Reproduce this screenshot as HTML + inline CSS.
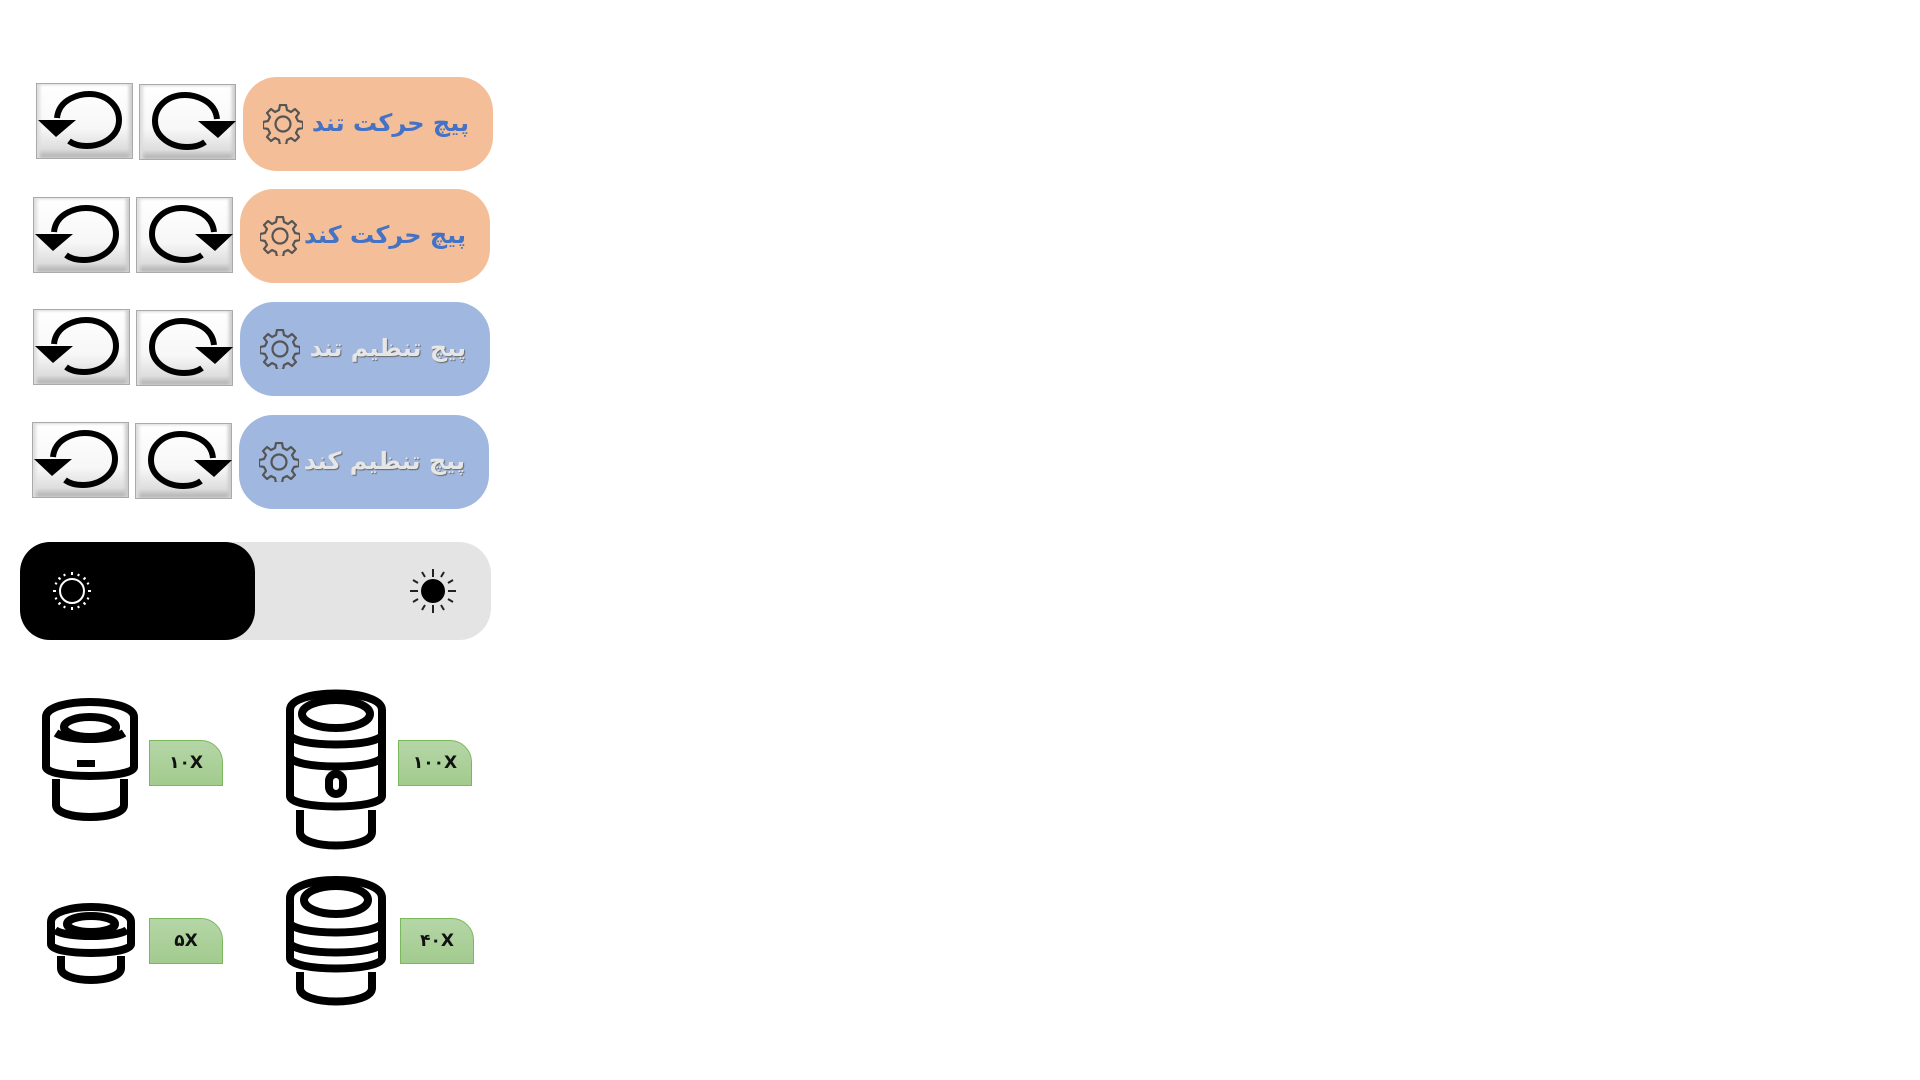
<!DOCTYPE html>
<html><head><meta charset="utf-8"><style>
body{margin:0;width:1920px;height:1080px;background:#fff;position:relative;overflow:hidden;font-family:"DejaVu Sans","Liberation Sans",sans-serif}
.a{position:absolute}
.btn{position:absolute;width:97px;height:76px;box-sizing:border-box;border:1px solid #aaa;background:linear-gradient(180deg,#fff 0%,#f7f7f7 60%,#ddd 88%,#aaa 100%);box-shadow:inset 3px 0 3px #ddd,inset -3px 0 3px #ccc}
.pill{position:absolute;width:250px;height:94px;border-radius:34px}
.pill span{position:absolute;right:24px;top:26px;font-weight:bold;font-size:24px;direction:rtl;white-space:nowrap;line-height:40px}
.or{background:#f4bf98;color:#4472c4}
.bl{background:#a0b8e0;color:#e6e6e6;text-shadow:1px 1px 1px #666}
.pill svg{position:absolute;left:20px;top:27px}
.lab{position:absolute;width:74px;height:46px;background:linear-gradient(180deg,#b5d6a7,#a2cb8e);border:1px solid #7ab85c;box-sizing:border-box;border-top-right-radius:22px;display:flex;align-items:center;justify-content:center;font-size:17px;font-weight:bold;color:#111}
</style></head><body>
<svg width="0" height="0" style="position:absolute"><defs>
<g id="ccw"><path d="M20 34 C22 14 44 10 52 10 C70 10 82 22 82 36 C82 52 66 62 50 62 C42 62 36 60 32 57" fill="none" stroke="#000" stroke-width="6"/><path d="M1 36 L39 36 L19 53 Z" fill="#000"/></g>
<g id="cw"><path d="M77 34 C75 14 53 10 45 10 C27 10 15 22 15 36 C15 52 31 62 47 62 C55 62 61 60 65 57" fill="none" stroke="#000" stroke-width="6"/><path d="M58 36 L96 36 L78 53 Z" fill="#000"/></g>
<g id="gear"><path d="M17 1h6l1 5 4 2 4-3 4 4-3 4 2 4 5 1v6l-5 1-2 4 3 4-4 4-4-3-4 2-1 5h-6l-1-5-4-2-4 3-4-4 3-4-2-4-5-1v-6l5-1 2-4-3-4 4-4 4 3 4-2z" fill="none" stroke="#555" stroke-width="2.2" stroke-linejoin="round"/><circle cx="20" cy="20" r="7.5" fill="none" stroke="#555" stroke-width="2.2"/></g>
</defs></svg>

<div class="btn" style="left:36px;top:83px"><svg width="97" height="76"><use href="#ccw"/></svg></div>
<div class="btn" style="left:139px;top:84px"><svg width="97" height="76"><use href="#cw"/></svg></div>
<div class="btn" style="left:33px;top:197px"><svg width="97" height="76"><use href="#ccw"/></svg></div>
<div class="btn" style="left:136px;top:197px"><svg width="97" height="76"><use href="#cw"/></svg></div>
<div class="btn" style="left:33px;top:309px"><svg width="97" height="76"><use href="#ccw"/></svg></div>
<div class="btn" style="left:136px;top:310px"><svg width="97" height="76"><use href="#cw"/></svg></div>
<div class="btn" style="left:32px;top:422px"><svg width="97" height="76"><use href="#ccw"/></svg></div>
<div class="btn" style="left:135px;top:423px"><svg width="97" height="76"><use href="#cw"/></svg></div>

<div class="pill or" style="left:243px;top:77px"><svg width="40" height="40"><use href="#gear"/></svg><span>پیچ حرکت تند</span></div>
<div class="pill or" style="left:240px;top:189px"><svg width="40" height="40"><use href="#gear"/></svg><span>پیچ حرکت کند</span></div>
<div class="pill bl" style="left:240px;top:302px"><svg width="40" height="40"><use href="#gear"/></svg><span>پیچ تنظیم تند</span></div>
<div class="pill bl" style="left:239px;top:415px"><svg width="40" height="40"><use href="#gear"/></svg><span>پیچ تنظیم کند</span></div>

<div class="a" style="left:20px;top:542px;width:471px;height:98px;background:#e4e4e4;border-radius:32px"></div>
<div class="a" style="left:20px;top:542px;width:235px;height:98px;background:#000;border-radius:30px"></div>
<svg class="a" style="left:52px;top:571px" width="40" height="40"><circle cx="20" cy="20" r="12" fill="none" stroke="#fff" stroke-width="2"/><g stroke="#fff" stroke-width="2"><path d="M20 1v3M20 36v3M1 20h3M36 20h3M6.5 6.5l2 2M31.5 31.5l2 2M6.5 33.5l2-2M31.5 8.5l2-2M12 3l1 2M27 3l-1 2M12 37l1-2M27 37l-1-2M3 12l2 1M37 12l-2 1M3 28l2-1M37 28l-2-1"/></g></svg>
<svg class="a" style="left:408px;top:566px" width="50" height="50"><circle cx="25" cy="25" r="12" fill="#000"/><g stroke="#222" stroke-width="2"><path d="M25 3v8M25 39v8M2 25h8M40 25h8M14 6l3 5M36 6l-3 5M14 44l3-5M36 44l-3-5M5 14l5 3M45 14l-5 3M5 36l5-3M45 36l-5-3"/></g></svg>

<svg class="a" style="left:40px;top:695px" width="100" height="128" fill="none" stroke="#000" stroke-width="8" stroke-linejoin="round">
<path d="M6 22 C6 2 94 2 94 22 V72 C94 84 6 84 6 72 Z"/><path d="M16 38 C28 46 72 46 84 38"/><ellipse cx="50" cy="32" rx="26" ry="10"/>
<path d="M16 84 V110 C16 126 84 126 84 110 V84"/><rect x="37" y="65" width="18" height="7" fill="#000" stroke="none"/></svg>
<div class="lab" style="left:149px;top:740px">۱۰X</div>

<svg class="a" style="left:284px;top:686px" width="104" height="166" fill="none" stroke="#000" stroke-width="8" stroke-linejoin="round">
<path d="M6 24 C6 2 98 2 98 24 V110 C98 124 6 124 6 110 Z"/><ellipse cx="52" cy="28" rx="34" ry="14"/>
<path d="M6 48 C6 62 98 62 98 48"/><path d="M6 70 C6 84 98 84 98 70"/>
<path d="M16 124 V146 C16 164 88 164 88 146 V124"/><rect x="45" y="88" width="14" height="20" rx="7"/></svg>
<div class="lab" style="left:398px;top:740px">۱۰۰X</div>

<svg class="a" style="left:45px;top:900px" width="92" height="86" fill="none" stroke="#000" stroke-width="8" stroke-linejoin="round">
<path d="M6 22 C6 2 86 2 86 22 V44 C86 56 6 56 6 44 Z"/><ellipse cx="46" cy="24" rx="24" ry="8"/><path d="M10 30 C20 38 72 38 82 30"/>
<path d="M16 56 V68 C16 84 76 84 76 68 V56"/></svg>
<div class="lab" style="left:149px;top:918px">۵X</div>

<svg class="a" style="left:284px;top:872px" width="104" height="136" fill="none" stroke="#000" stroke-width="8" stroke-linejoin="round">
<path d="M6 26 C6 2 98 2 98 26 V86 C98 100 6 100 6 86 Z"/><ellipse cx="52" cy="28" rx="32" ry="14"/>
<path d="M6 50 C6 64 98 64 98 50"/><path d="M6 70 C6 84 98 84 98 70"/>
<path d="M16 100 V116 C16 134 88 134 88 116 V100"/></svg>
<div class="lab" style="left:400px;top:918px">۴۰X</div>
</body></html>
